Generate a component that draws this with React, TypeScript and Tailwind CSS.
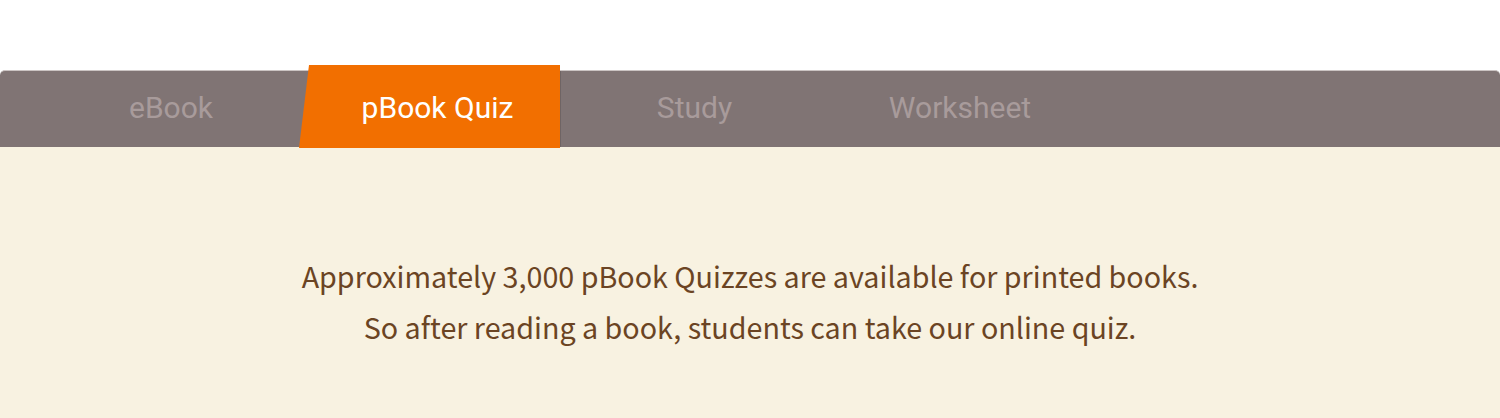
export default function App() {
  const tabText = "text-[30px] text-[#a89b9b] font-['Roboto',sans-serif] font-normal pb-[4px]";

  return (
    <div className="w-[1500px] h-[418px] bg-white overflow-hidden">
      <div className="mt-[70px] h-[77px] flex bg-[#807474] border-t border-[#cbc4c3] rounded-t-[5px] pl-[43px]">
        <div className={`w-[256px] flex items-center justify-center ${tabText}`}>eBook</div>
        <div className="-mt-[6px] h-[83px] w-[261px] flex items-center justify-center pl-[16px] bg-[#f26f00] [clip-path:polygon(10px_0,100%_0,100%_100%,0_100%)]">
          <span className="text-[30px] text-white font-['Roboto',sans-serif] font-normal pt-[1px]">pBook Quiz</span>
        </div>
        <div className="w-px h-full bg-[#6f6464]" />
        <div className={`w-[267px] flex items-center justify-center ${tabText}`}>Study</div>
        <div className={`w-[264px] flex items-center justify-center ${tabText}`}>Worksheet</div>
      </div>
      <div className="h-[271px] bg-[#f8f2e1] pt-[103px] text-center text-[28.7px] leading-[51px] text-[#6b4423] font-['Noto_Sans_CJK_KR',sans-serif] font-normal">
        <p>Approximately 3,000 pBook Quizzes are available for printed books.</p>
        <p>So after reading a book, students can take our online quiz.</p>
      </div>
    </div>
  );
}
